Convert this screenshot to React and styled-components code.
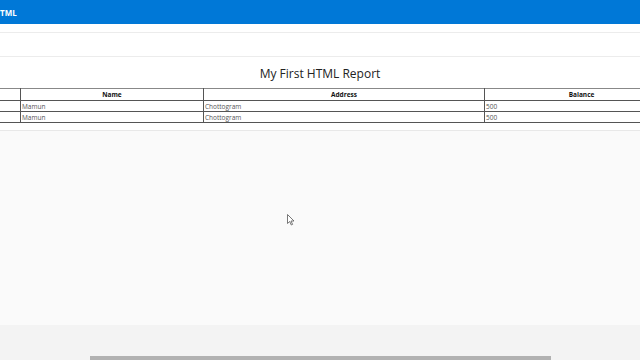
import React from "react";
import styled, { createGlobalStyle } from "styled-components";

const GlobalStyle = createGlobalStyle`
  html, body {
    margin: 0;
    padding: 0;
    overflow: hidden;
    background: #fafafa;
    font-family: "Open Sans", "Noto Sans", sans-serif;
  }
`;

const Page = styled.div`
  width: 640px;
  height: 360px;
  display: flex;
  flex-direction: column;
  overflow: hidden;
  position: relative;
`;

const Header = styled.header`
  height: 24px;
  background: #0078d7;
  display: flex;
  align-items: center;
  overflow: hidden;
`;

const Brand = styled.span`
  color: #fff;
  font-weight: 700;
  font-size: 8px;
  margin-left: -6px;
`;

const Band = styled.div`
  height: ${(p) => p.h}px;
  background: #fff;
  border-bottom: 1px solid #ececec;
`;

const Report = styled.section`
  background: #fff;
  padding-top: 6px;
  padding-bottom: 7px;
  border-bottom: 1px solid #e8e8e8;
  display: flex;
  flex-direction: column;
  align-items: center;
`;

const Title = styled.h1`
  margin: 0 0 3px;
  font-size: 12px;
  font-weight: 400;
  color: #222;
  line-height: 22px;
`;

const Table = styled.table`
  align-self: flex-start;
  margin-left: -20px;
  width: 698px;
  border-collapse: collapse;
  table-layout: fixed;
  font-size: 6.5px;
  color: #555;
`;

const Th = styled.th`
  border: 1px solid #555;
  border-top-color: #888;
  height: 11px;
  padding: 0;
  font-weight: 700;
  color: #111;
  text-align: center;
`;

const Td = styled.td`
  border: 1px solid #555;
  height: 10px;
  padding: 0 1px;
  text-align: left;
  white-space: nowrap;
`;

const Body = styled.div`
  flex: 1;
  background: #fafafa;
`;

const Footer = styled.div`
  height: 35px;
  background: #f3f3f3;
  display: flex;
  align-items: flex-end;
`;

const Thumb = styled.div`
  margin-left: 90px;
  width: 461px;
  height: 4px;
  background: #b1b1b1;
`;

const Cursor = styled.svg`
  position: absolute;
  left: 287px;
  top: 214px;
`;

const rows = [
  { name: "Mamun", address: "Chottogram", balance: 500 },
  { name: "Mamun", address: "Chottogram", balance: 500 },
];

export default function App() {
  return (
    <Page>
      <GlobalStyle />
      <Header>
        <Brand>HTML</Brand>
      </Header>
      <Band h={8} />
      <Band h={23} />
      <Report>
        <Title>My First HTML Report</Title>
        <Table>
          <colgroup>
            <col style={{ width: 40 }} />
            <col style={{ width: 183 }} />
            <col style={{ width: 281 }} />
            <col style={{ width: 194 }} />
          </colgroup>
          <thead>
            <tr>
              <Th />
              <Th>Name</Th>
              <Th>Address</Th>
              <Th>Balance</Th>
            </tr>
          </thead>
          <tbody>
            {rows.map((r, i) => (
              <tr key={i}>
                <Td />
                <Td>{r.name}</Td>
                <Td>{r.address}</Td>
                <Td>{r.balance}</Td>
              </tr>
            ))}
          </tbody>
        </Table>
      </Report>
      <Body />
      <Footer>
        <Thumb />
      </Footer>
      <Cursor width="8" height="12" viewBox="0 0 8 12">
        <path d="M0.5 0.5 L0.5 9.5 L2.7 7.5 L4.3 11 L5.6 10.4 L4 7 L7 7 Z" fill="#fff" stroke="#555" strokeWidth="0.8" />
      </Cursor>
    </Page>
  );
}
